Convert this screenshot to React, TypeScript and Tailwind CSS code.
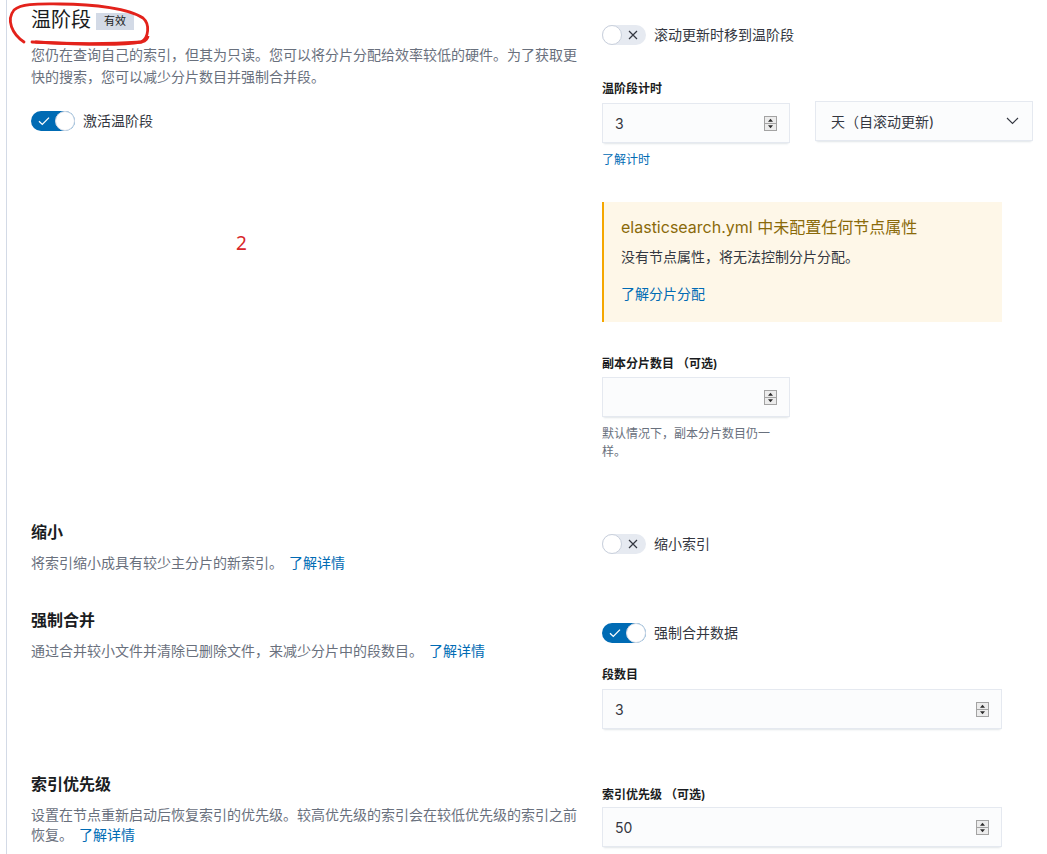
import React from "react";

const FONT = "font-['Inter','Noto_Sans_CJK_SC',sans-serif]";

function Toggle({ on }: { on: boolean }) {
  return (
    <span
      className={`relative inline-flex h-5 w-11 shrink-0 items-center rounded-full ${
        on ? "bg-[#006bb4]" : "bg-[#e6eaf1]"
      }`}
    >
      {on ? (
        <svg className="absolute left-[7px] top-[5px]" width="12" height="10" viewBox="0 0 12 10">
          <path d="M1 5.2 L4.3 8.4 L11 1.6" fill="none" stroke="#ffffff" strokeWidth="1.3" />
        </svg>
      ) : (
        <svg className="absolute right-[8px] top-[5px]" width="10" height="10" viewBox="0 0 10 10">
          <path d="M1 1 L9 9 M9 1 L1 9" fill="none" stroke="#343741" strokeWidth="1.2" />
        </svg>
      )}
      <span
        className={`absolute top-0 h-5 w-5 rounded-full bg-white border ${
          on ? "right-0 border-[#d3dae6]" : "left-0 border-[#c9d0dc]"
        }`}
      />
    </span>
  );
}

function Spinner() {
  return (
    <svg width="13" height="15" viewBox="0 0 13 15" className="shrink-0">
      <rect x="0.5" y="0.5" width="12" height="14" fill="#ececec" stroke="#a3a3a3" />
      <line x1="1" y1="7.5" x2="12" y2="7.5" stroke="#a3a3a3" />
      <path d="M6.5 2.8 L9 5.8 L4 5.8 Z" fill="#2b2b2b" />
      <path d="M4 9.2 L9 9.2 L6.5 12.2 Z" fill="#2b2b2b" />
    </svg>
  );
}

function NumberInput({ value, width }: { value: string; width: string }) {
  return (
    <div
      className={`${width} flex h-10 items-center justify-between bg-[#fbfcfd] pl-3 pr-3 border border-[#e5e9f0] shadow-[0_1px_1px_-1px_rgba(152,162,179,0.25),0_3px_2px_-2px_rgba(152,162,179,0.25)]`}
    >
      <span className="text-[14px] text-[#343741]">{value}</span>
      <Spinner />
    </div>
  );
}

function Label({ children }: { children: React.ReactNode }) {
  return <div className="text-[12px] leading-[18px] font-semibold text-[#1a1c21]">{children}</div>;
}

function Link({ children }: { children: React.ReactNode }) {
  return <span className="text-[#006bb4]">{children}</span>;
}

export default function App() {
  return (
    <div className={`${FONT} relative min-h-[854px] bg-white`}>
      <div className="ml-[6px] min-h-[854px] border-l border-[#d3dae6] pl-6 pt-[6px]">
        {/* Row 1 */}
        <div className="flex items-start">
          <div className="w-[548px]">
            <div className="flex items-center">
              <h2 className="text-[20px] leading-[28px] text-[#1a1c21]">温阶段</h2>
              <span className="ml-[5px] mt-[2px] inline-flex h-[17px] items-center bg-[#d3dae6] px-[8px] text-[11px] text-[#1a1c21]">
                有效
              </span>
            </div>
            <p className="mt-[10px] text-[14px] leading-[22px] text-[#69707d]">
              您仍在查询自己的索引，但其为只读。您可以将分片分配给效率较低的硬件。为了获取更快的搜索，您可以减少分片数目并强制合并段。
            </p>
            <div className="mt-[22px] flex items-center gap-2">
              <Toggle on />
              <span className="text-[14px] text-[#343741]">激活温阶段</span>
            </div>
          </div>
          <div className="ml-[23px] w-[431px] pt-[18px]">
            <div className="flex items-center gap-2">
              <Toggle on={false} />
              <span className="text-[14px] text-[#343741]">滚动更新时移到温阶段</span>
            </div>
            <div className="mt-[35px]">
              <Label>温阶段计时</Label>
            </div>
            <div className="mt-[4px] flex items-start gap-[25px]">
              <div className="mt-[1px]">
                <NumberInput value="3" width="w-[188px]" />
              </div>
              <div className="-mt-[1px] flex h-10 w-[219px] items-center justify-between bg-[#fbfcfd] pl-[15px] pr-[13px] border border-[#e5e9f0] shadow-[0_1px_1px_-1px_rgba(152,162,179,0.25),0_3px_2px_-2px_rgba(152,162,179,0.25)]">
                <span className="text-[14px] text-[#343741]">天（自滚动更新)</span>
                <svg width="13" height="8" viewBox="0 0 13 8">
                  <path d="M1 1 L6.5 6.5 L12 1" fill="none" stroke="#343741" strokeWidth="1.1" />
                </svg>
              </div>
            </div>
            <div className="mt-[8px] text-[12px] leading-[18px]">
              <Link>了解计时</Link>
            </div>
            <div className="mt-[33px] w-[400px] border-l-2 border-[#f5a700] bg-[#fef7e8] pb-[18px] pl-[17px] pr-4 pt-[13px]">
              <div className="text-[16px] leading-[24px] text-[#8a6a0a]">elasticsearch.yml 中未配置任何节点属性</div>
              <div className="mt-[7px] text-[14px] leading-[21px] text-[#343741]">没有节点属性，将无法控制分片分配。</div>
              <div className="mt-[16px] text-[14px] leading-[21px]">
                <Link>了解分片分配</Link>
              </div>
            </div>
            <div className="mt-[33px]">
              <Label>副本分片数目 （可选)</Label>
            </div>
            <div className="mt-[4px]">
              <NumberInput value="" width="w-[188px]" />
            </div>
            <p className="mt-[8px] w-[172px] text-[12px] leading-[18px] text-[#69707d]">
              默认情况下，副本分片数目仍一样。
            </p>
          </div>
        </div>

        {/* Row 2 */}
        <div className="mt-[59px] flex items-start">
          <div className="w-[548px]">
            <h3 className="text-[16px] leading-[24px] font-semibold text-[#1a1c21]">缩小</h3>
            <p className="mt-[8px] text-[14px] leading-[21px] text-[#69707d]">
              将索引缩小成具有较少主分片的新索引。<span className="ml-[6px] text-[#006bb4]">了解详情</span>
            </p>
          </div>
          <div className="ml-[23px] w-[431px] pt-[13px]">
            <div className="flex items-center gap-2">
              <Toggle on={false} />
              <span className="text-[14px] text-[#343741]">缩小索引</span>
            </div>
          </div>
        </div>

        {/* Row 3 */}
        <div className="mt-[35px] flex items-start">
          <div className="w-[548px]">
            <h3 className="text-[16px] leading-[24px] font-semibold text-[#1a1c21]">强制合并</h3>
            <p className="mt-[8px] text-[14px] leading-[21px] text-[#69707d]">
              通过合并较小文件并清除已删除文件，来减少分片中的段数目。<span className="ml-[6px] text-[#006bb4]">了解详情</span>
            </p>
          </div>
          <div className="ml-[23px] w-[431px] pt-[14px]">
            <div className="flex items-center gap-2">
              <Toggle on />
              <span className="text-[14px] text-[#343741]">强制合并数据</span>
            </div>
            <div className="mt-[23px]">
              <Label>段数目</Label>
            </div>
            <div className="mt-[5px]">
              <NumberInput value="3" width="w-[400px]" />
            </div>
          </div>
        </div>

        {/* Row 4 */}
        <div className="mt-[43px] flex items-start">
          <div className="w-[548px]">
            <h3 className="text-[16px] leading-[24px] font-semibold text-[#1a1c21]">索引优先级</h3>
            <p className="mt-[9px] text-[14px] leading-[20px] text-[#69707d]">
              设置在节点重新启动后恢复索引的优先级。较高优先级的索引会在较低优先级的索引之前恢复。<span className="ml-[6px] text-[#006bb4]">了解详情</span>
            </p>
          </div>
          <div className="ml-[23px] w-[431px] pt-[14px]">
            <Label>索引优先级 （可选)</Label>
            <div className="mt-[3px]">
              <NumberInput value="50" width="w-[400px]" />
            </div>
          </div>
        </div>
      </div>

      {/* red hand annotation */}
      <svg
        className="pointer-events-none absolute left-0 top-0 z-10 h-[60px] w-[170px]"
        viewBox="0 0 170 60"
      >
        <path
          d="M24 42 C12 34 6 20 14 10 C22 3 40 4 60 4 C95 4 130 9 143 18 C150 24 149 38 141 42 C120 46 70 44 36 42"
          fill="none"
          stroke="#e3221b"
          strokeWidth="2.8"
          strokeLinecap="round"
        />
      </svg>
      <svg
        className="pointer-events-none absolute left-[30px] top-[36px] z-10 h-[12px] w-[120px]"
        viewBox="0 0 120 12"
      >
        <path d="M2 6 C40 8 80 8 112 6 C116 5 118 2 118 0" fill="none" stroke="#e3221b" strokeWidth="2.8" strokeLinecap="round" />
      </svg>
      <span className="pointer-events-none absolute left-[236px] top-[231px] text-[19px] leading-[24px] text-[#d8262a] font-['Noto_Sans',sans-serif]">
        2
      </span>
    </div>
  );
}
